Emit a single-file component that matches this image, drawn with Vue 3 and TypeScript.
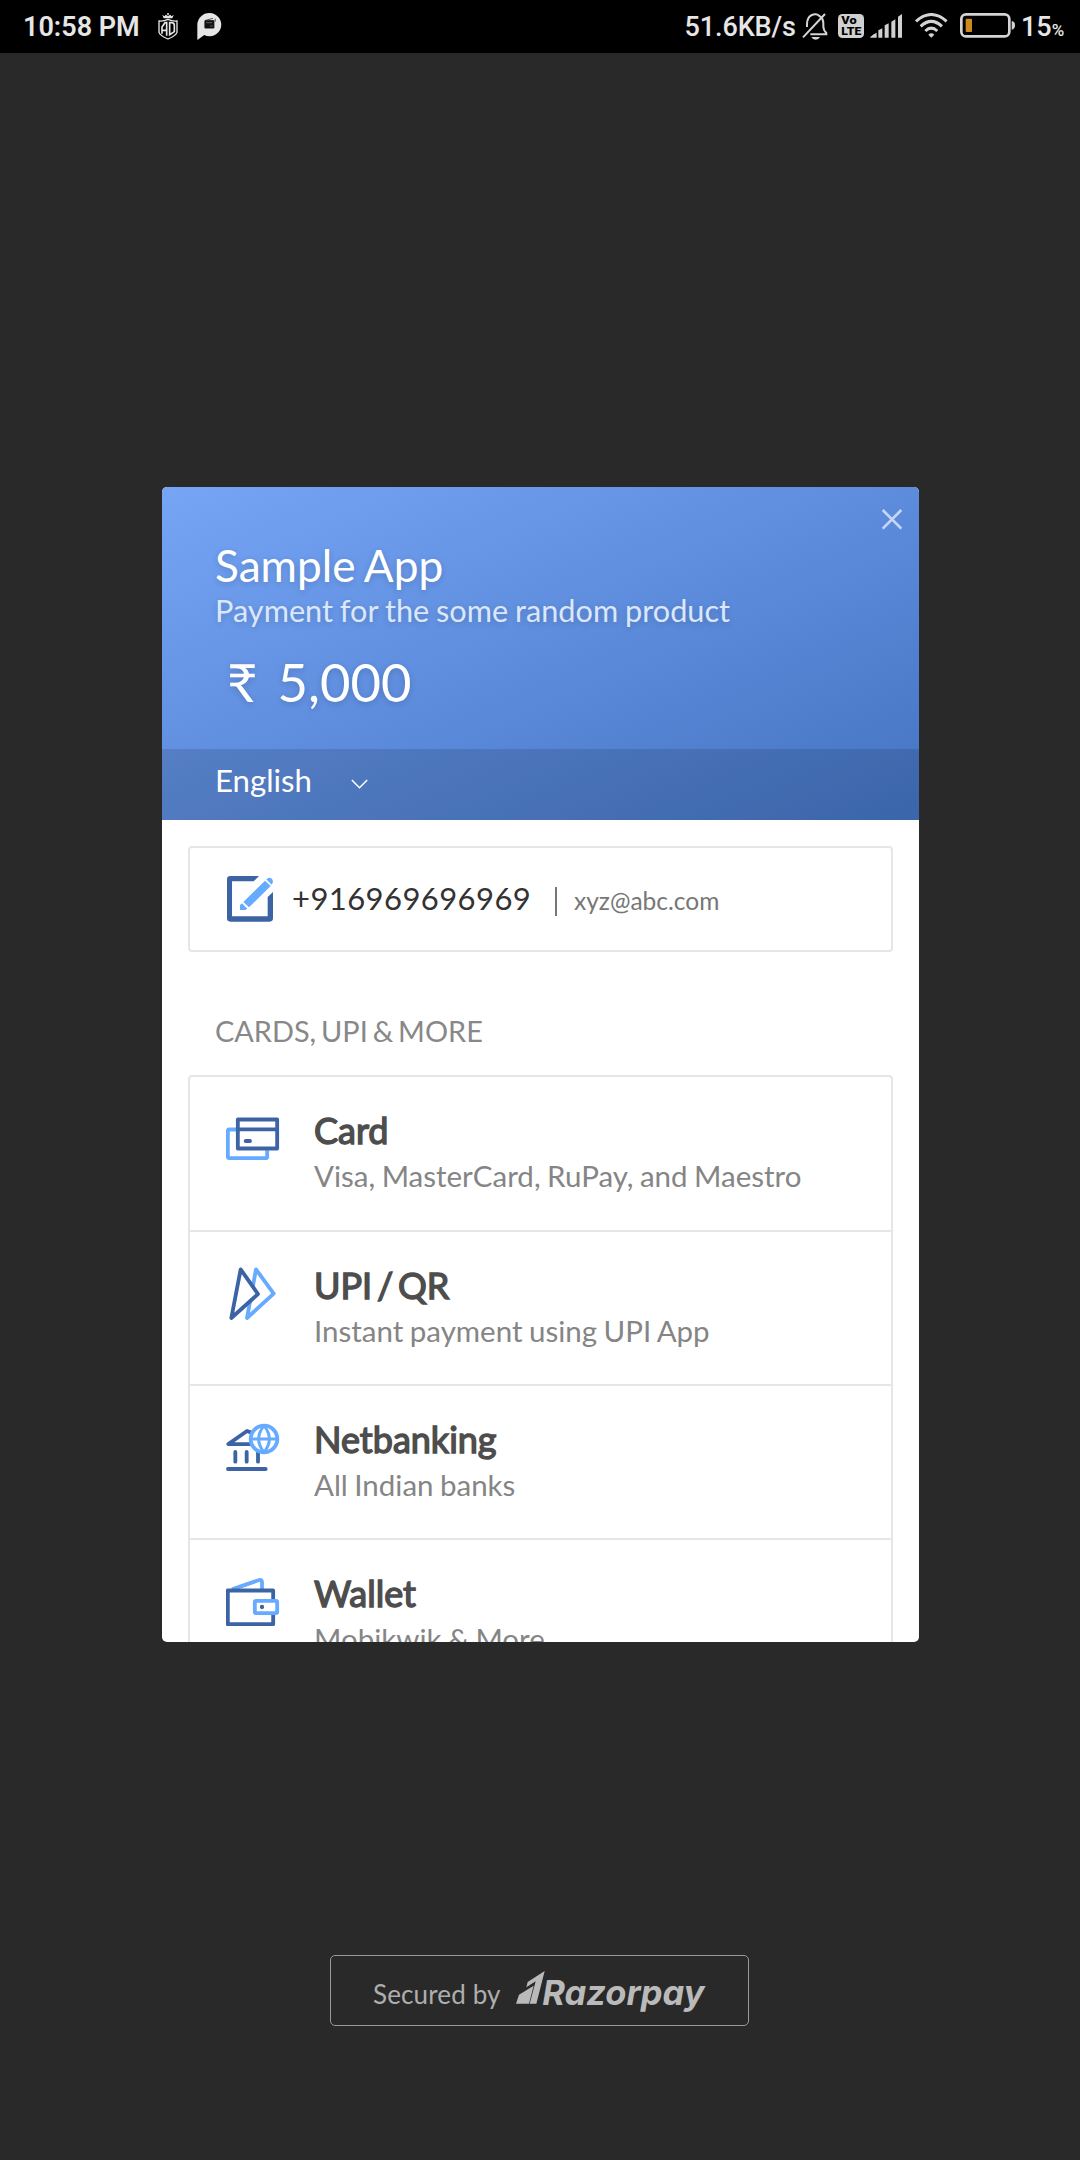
<script setup lang="ts">
interface Method {
  id: 'card' | 'upi' | 'netbanking' | 'wallet'
  title: string
  detail: string
}

const methods: Method[] = [
  { id: 'card', title: 'Card', detail: 'Visa, MasterCard, RuPay, and Maestro' },
  { id: 'upi', title: 'UPI / QR', detail: 'Instant payment using UPI App' },
  { id: 'netbanking', title: 'Netbanking', detail: 'All Indian banks' },
  { id: 'wallet', title: 'Wallet', detail: 'Mobikwik & More' },
]
</script>

<template>
  <div class="screen">
    <header class="status">
      <span class="time">10:58 PM</span>
      <svg class="shield" viewBox="0 0 60 81">
        <path d="M13 6 L20 10 L23 5 L30 9 L37 5 L40 10 L47 6 L43 16 H17 Z" fill="#e6e6e6" />
        <circle cx="30" cy="3" r="3" fill="#e6e6e6" />
        <path d="M3 24 Q18 25 30 19 Q42 25 57 24 V58 Q54 68 30 78 Q6 68 3 58 Z" fill="none" stroke="#e6e6e6" stroke-width="4" />
        <path d="M12 62 V42 L21 29 H26 V68 M12 52 H26 M35 29 H41 Q49 29 49 37 V56 L35 65 Z" fill="none" stroke="#e6e6e6" stroke-width="5" />
      </svg>
      <svg class="bubble" viewBox="0 0 74 81">
        <path d="M38 0 A35 35 0 1 1 22 66 L1 81 V36 A36 36 0 0 1 38 0 Z" fill="#e6e6e6" />
        <path d="M24 23 H51 V45 H24 Z" fill="#111" stroke="#111" stroke-width="3" />
        <path d="M25 22 L48 16 M55 17 V26" stroke="#333" stroke-width="2.5" />
        <path d="M28 29 H46 M40 39 H47" stroke="#777" stroke-width="2.5" />
      </svg>
      <span class="speed">51.6KB/s</span>
      <svg class="bell" viewBox="0 0 78 81" fill="none" stroke="#d4d4d4" stroke-width="6">
        <path d="M25 64 H73 V60 Q64 52 64 40 V32 Q64 15 52 9 Q46 3 38 4 Q24 6 19 16 Q15 22 15 32 V42" />
        <path d="M3 73 L69 3" />
        <path d="M28 72 H54 Q50 80 41 80 Q32 80 28 72 Z" fill="#d4d4d4" stroke="none" />
      </svg>
      <svg class="volte" viewBox="0 0 78 72">
        <rect width="78" height="72" rx="13" fill="#d0d0d0" />
        <text x="10" y="31" class="volte-text" textLength="46" lengthAdjust="spacingAndGlyphs">Vo</text>
        <text x="10" y="63" class="volte-text" textLength="60" lengthAdjust="spacingAndGlyphs">LTE</text>
      </svg>
      <svg class="signal" viewBox="0 0 96 72" fill="#d0d0d0">
        <path d="M0 70 Q10 60 20 56 V71 H2 Z M25 49 L37 43 V71 H25 Z M44 34 L56 28 V71 H44 Z M64 23 L76 16 V71 H64 Z M84 8 L96 0 V71 H84 Z" />
      </svg>
      <svg class="wifi" viewBox="0 0 98 75" fill="none" stroke="#d4d4d4" stroke-width="9">
        <path d="M3 25 Q49 -16 95 25 M17 40 Q49 10 81 40 M31 54 Q49 37 67 54" />
        <path d="M49 74 L40 65 Q49 56 58 65 Z" fill="#d4d4d4" stroke="none" />
      </svg>
      <svg class="battery" viewBox="0 0 165 75">
        <rect x="4" y="4" width="144" height="66" rx="14" fill="none" stroke="#d4d4d4" stroke-width="8" />
        <rect x="17" y="17" width="19" height="40" rx="3" fill="#cf8a1e" />
        <path d="M155 24 Q165 25 165 37 Q165 49 155 50 Z" fill="#d4d4d4" />
      </svg>
      <span class="level">15<small>%</small></span>
    </header>

    <main class="modal">
      <section class="head">
        <div class="merchant">
          <h1>Sample App</h1>
          <p class="purpose">Payment for the some random product</p>
          <p class="amount"><span class="rupee">₹</span><span class="value">5,000</span></p>
          <svg class="close" viewBox="0 0 60 62" fill="none" stroke="#c5d7f5" stroke-width="8">
            <path d="M2 3 L58 59 M58 3 L2 59" />
          </svg>
        </div>
        <div class="language">
          <span>English</span>
          <svg class="chevron" viewBox="0 0 50 30" fill="none" stroke="#fff" stroke-width="4.5">
            <path d="M2 3 L25 26 L48 3" />
          </svg>
        </div>
      </section>

      <section class="contact">
        <svg class="edit" viewBox="0 0 138 138">
          <path d="M96 0 H10 Q0 0 0 10 V127 Q0 137 10 137 H128 Q138 137 138 127 V48 L122 63 V121 H15 V16 H80 Z" fill="#3c64a4" />
          <path d="M114 14 L131 30 L66 94 L49 78 Z M45 82 L61 98 L55 102 H39 V87 Z M118 10 Q127 1 135 9 Q141 17 134 26 Z" fill="#66abff" />
        </svg>
        <span class="phone">+916969696969</span>
        <i class="divider" />
        <span class="email">xyz@abc.com</span>
      </section>

      <h2>CARDS, UPI &amp; MORE</h2>

      <ul class="methods">
        <li v-for="m in methods" :key="m.id">
          <svg class="icon" viewBox="0 0 162 162" fill="none" stroke-width="11.5" stroke-linecap="round" stroke-linejoin="round">
            <g v-if="m.id === 'card'">
              <path class="light" stroke-linecap="butt" d="M30 52.5 H10 Q5.5 52.5 5.5 57 V134 Q5.5 138.5 10 138.5 H119 Q123.5 138.5 123.5 134 V115" />
              <path class="dark" d="M35.5 22.5 H153.5 V109.5 H35.5 Z M36 52 H153 M59 87 H72" />
            </g>
            <g v-else-if="m.id === 'upi'">
              <path class="light" d="M90 7 L143 80 L63 153 Z" />
              <path class="dark" fill="#fff" d="M44 7 L96 81 L16 153 Z" />
            </g>
            <g v-else-if="m.id === 'netbanking'">
              <path class="dark" d="M74 34 L63 30 L7 69.5 H80 M28 93 V122 M62 93 V122 M96 93 V122 M6 144 H119" />
              <circle class="light" cx="114" cy="54" r="40" fill="#fff" />
              <path class="light" stroke-width="9" d="M76 54 H152 M114 14 Q82 54 114 94 M114 14 Q146 54 114 94" />
            </g>
            <g v-else>
              <path class="light" stroke-linecap="butt" d="M18 43 L100 15 Q108 13 108 21 V42" />
              <path class="dark" d="M5.5 46.5 H141.5 V147.5 H5.5 Z" />
              <rect class="light" x="86.5" y="77.5" width="67" height="37" rx="4" fill="#fff" />
              <circle cx="108" cy="96" r="6.5" fill="#3c64a4" />
            </g>
          </svg>
          <div class="copy">
            <h3>{{ m.title }}</h3>
            <p>{{ m.detail }}</p>
          </div>
        </li>
      </ul>
    </main>

    <footer class="secured">
      <span class="by">Secured by</span>
      <svg class="mark" viewBox="0 0 86 98" fill="#bababa">
        <path d="M86 0 L35 33 L31 49 L59 31 L41 98 H61 Z" />
        <path d="M53 44 L9 71 L0 98 H39 Z" />
      </svg>
      <span class="brand">Razorpay</span>
    </footer>
  </div>
</template>

<style>
body {
  background: #292929;
}
</style>

<style scoped>
* {
  box-sizing: border-box;
  margin: 0;
  padding: 0;
}
svg {
  display: block;
  flex: none;
}
.screen {
  width: 1080px;
  height: 2160px;
  overflow: hidden;
  background: #292929;
  font-family: Lato, "Liberation Sans", sans-serif;
  display: flex;
  flex-direction: column;
  align-items: center;
}
.status {
  width: 1080px;
  height: 53px;
  flex: none;
  background: #000;
  display: flex;
  align-items: flex-start;
  padding: 13px 0 0 23px;
  color: #e6e6e6;
  font: 500 27px/29px Roboto, "Noto Sans", sans-serif;
  white-space: nowrap;
}
.time { width: 135px; font-weight: 600; }
.shield { width: 20px; height: 27px; }
.bubble { width: 24.5px; height: 27px; margin-left: 19px; }
.speed { width: 117px; margin-left: 463px; letter-spacing: -.1px; }
.bell { width: 26px; height: 27px; }
.volte { width: 26px; height: 24px; margin: 1px 0 0 10.5px; }
.volte-text { font: 900 31px Roboto, sans-serif; fill: #000; }
.signal { width: 32px; height: 24px; margin: 1px 0 0 6px; }
.wifi { width: 32.6px; height: 25px; margin-left: 13px; }
.battery { width: 55px; height: 25px; margin-left: 12.4px; }
.level { margin-left: 6px; }
.level small { font-size: 17px; }

.modal {
  width: 757px;
  height: 1155px;
  margin-top: 434px;
  flex: none;
  overflow: hidden;
  border-radius: 5px;
  background: #fff;
  position: relative;
  left: .5px;
}
.head {
  height: 333px;
  background: linear-gradient(to bottom right, #76a5f6, #4473c2);
  color: #fff;
}
.merchant {
  position: relative;
  height: 262px;
  padding: 52px 0 0 53px;
  text-shadow: 0 2px 6px rgba(0, 0, 0, .16);
}
h1 { font-size: 44.2px; line-height: 52px; font-weight: 400; word-spacing: -1.5px; }
.purpose { font-size: 30.7px; line-height: 40px; color: #dbe7fb; word-spacing: -1px; }
.amount { display: flex; font-size: 52.6px; line-height: 64px; margin-top: 19px; }
.rupee { width: 62.5px; padding-left: 12px; }
.close {
  position: absolute;
  top: 22px;
  right: 17px;
  width: 20px;
  height: 20.7px;
}
.language {
  height: 71px;
  padding-left: 53px;
  background: rgba(20, 30, 50, .16);
  display: flex;
  font-size: 31.2px;
  line-height: 62px;
}
.language span { width: 136px; }
.chevron { width: 17px; height: 10px; margin-top: 30px; }

.contact {
  width: 705px;
  height: 106px;
  margin: 26px auto 0;
  border: 2px solid #e6e6e6;
  border-radius: 4px;
  display: flex;
  padding: 28px 0 0 37px;
}
.edit { width: 46px; height: 46px; }
.phone { width: 263px; margin-left: 19px; font-size: 31px; line-height: 44px; letter-spacing: .42px; color: #333; }
.divider { width: 2px; height: 29px; margin: 11px 17px 0 0; background: #777; }
.email { font-size: 24.5px; line-height: 50px; color: #777; }
h2 {
  margin: 60px 0 0 53px;
  font-size: 28.9px;
  line-height: 37px;
  font-weight: 400;
  word-spacing: -2.5px;
  color: #888;
}
.methods {
  width: 705px;
  margin: 26px auto 0;
  border: 2px solid #e6e6e6;
  border-radius: 4px;
  list-style: none;
}
li {
  height: 154px;
  border-bottom: 2px solid #e6e6e6;
  padding: 35px 0 0 36px;
  display: flex;
}
li:first-child { height: 155px; }
.icon { width: 54px; height: 54px; }
.light { stroke: #66abff; }
.dark { stroke: #3c64a4; }
.copy { margin-left: 34px; }
h3 {
  font-size: 36px;
  line-height: 37px;
  font-weight: 400;
  word-spacing: -4.5px;
  color: #4d4d4d;
  -webkit-text-stroke: 1.4px #4d4d4d;
}
.copy p { font-size: 29.5px; line-height: 54px; word-spacing: -1.1px; color: #858585; }

.secured {
  width: 419px;
  height: 71px;
  flex: none;
  margin: 313px 1px 0 0;
  border: 1.5px solid #999;
  border-radius: 5px;
  display: flex;
  padding: 15px 0 0 42px;
  color: #bababa;
}
.by { width: 143px; font-size: 26px; line-height: 46px; color: #aeaeae; letter-spacing: .15px; }
.mark { width: 28.7px; height: 32.7px; }
.brand {
  margin-left: -2.5px;
  font: italic 700 34.5px/44px Inter, "Liberation Sans", sans-serif;
}
</style>
